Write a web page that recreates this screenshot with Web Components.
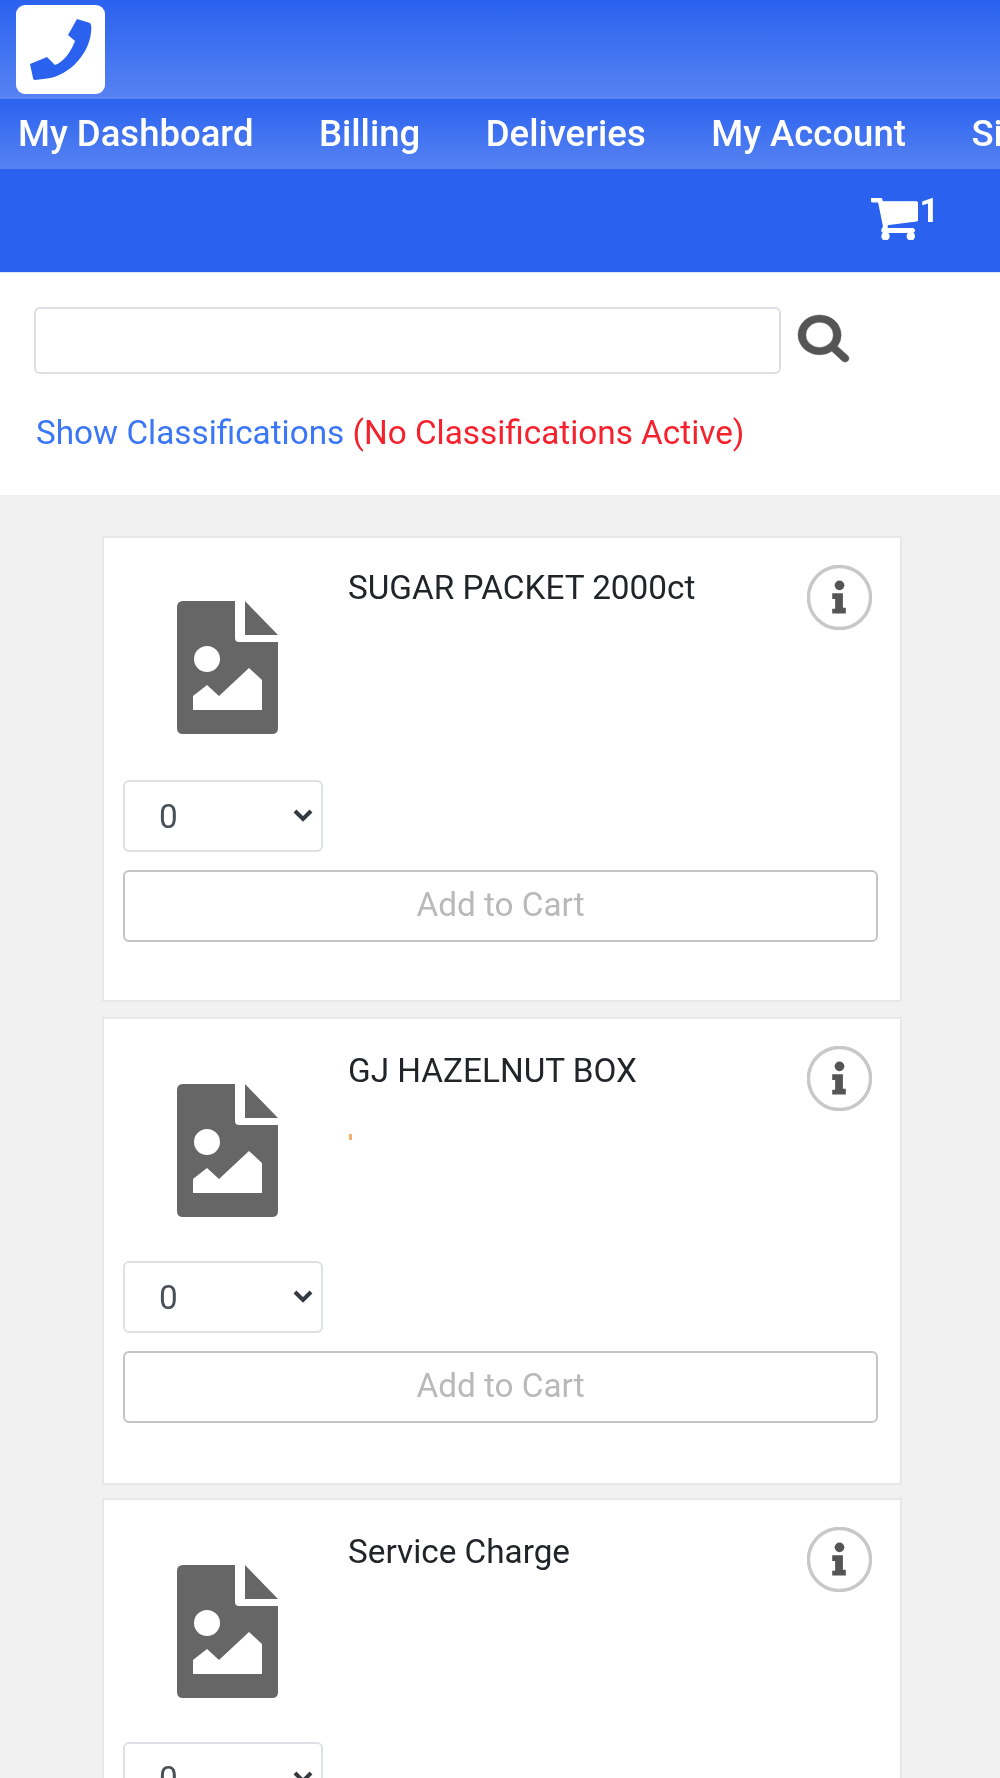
<!DOCTYPE html>
<html>
<head>
<meta charset="utf-8">
<title>Order</title>
<style>
  html, body { margin: 0; height: 1778px; overflow: hidden; background: #f1f1f1; font-family: Roboto, sans-serif; }
  /* the reference is a soft upscale, so take the edge off everything a little */
  body { filter: blur(0.5px); }
</style>
</head>
<body>
<app-header></app-header>
<search-panel></search-panel>
<product-list>
  <product-card name="SUGAR PACKET 2000ct"></product-card>
  <product-card name="GJ HAZELNUT BOX" mark></product-card>
  <product-card name="Service Charge"></product-card>
</product-list>

<script>
class AppHeader extends HTMLElement {
  constructor() {
    super();
    this.attachShadow({ mode: "open" });
    this.shadowRoot.innerHTML = `
      <style>
        :host { display: block; overflow: hidden; color: #fff; font-family: Roboto, sans-serif; }
        .brand {
          height: 99px;
          padding: 5px 0 0 16px;
          box-sizing: border-box;
          background: linear-gradient(#2a62ef, #5783f2);
        }
        .logo { display: block; width: 89px; height: 89px; background: #fff; border-radius: 9px; }
        nav {
          display: flex;
          gap: 65.5px;
          height: 68px;
          padding: 0 0 2px 18px;
          align-items: center;
          white-space: nowrap;
          font-size: 36.5px;
          font-weight: 500;
          background: linear-gradient(#2a62ef, #5783f2);
        }
        .cart-row {
          display: flex;
          justify-content: flex-end;
          height: 104px;
          padding: 29px 61px 0 0;
          box-sizing: border-box;
          background: #2a62ef;
          border-bottom: 1px solid #dfe7fb;
        }
        .cart { width: 47px; height: 42px; fill: #fff; stroke: #fff; stroke-width: 40; }
        .count { font-size: 34px; font-weight: 700; line-height: 25px; margin-left: 1px; }
      </style>
      <div class="brand">
        <svg class="logo" viewBox="16 5 89 89">
          <path fill="#2a62ef" d="M77 19L90 23Q92 25 91 33C88 57 66 78 43 79L35 80Q33 80 33 78L30 64L47 57L55 65C63 62 70 54 75 41L68 35Z"/>
        </svg>
      </div>
      <nav>
        <span>My Dashboard</span>
        <span>Billing</span>
        <span>Deliveries</span>
        <span>My Account</span>
        <span>Sign Out</span>
      </nav>
      <div class="cart-row">
        <svg class="cart" viewBox="64 256 1664 1408" preserveAspectRatio="none">
          <path d="M704 1536q0 52-38 90t-90 38-90-38-38-90 38-90 90-38 90 38 38 90zm896 0q0 52-38 90t-90 38-90-38-38-90 38-90 90-38 90 38 38 90zm128-1088v512q0 24-16.5 42.5t-40.5 21.5l-1044 122q13 60 13 70 0 16-24 64h920q26 0 45 19t19 45-19 45-45 19h-1024q-26 0-45-19t-19-45q0-11 8-31.5t16-36 21.5-40 15.5-29.5l-177-823h-204q-26 0-45-19t-19-45 19-45 45-19h256q16 0 28.5 6.5t19.5 15.5 13 24.5 8 26 5.5 29.5 4.5 26h1201q26 0 45 19t19 45z"/>
        </svg>
        <span class="count">1</span>
      </div>
    `;
  }
}

class SearchPanel extends HTMLElement {
  constructor() {
    super();
    this.attachShadow({ mode: "open" });
    this.shadowRoot.innerHTML = `
      <style>
        :host { display: block; height: 222px; padding: 34px 0 0 34px; box-sizing: border-box; background: #fff; font-family: Roboto, sans-serif; }
        .row { display: flex; align-items: flex-start; gap: 17px; }
        input {
          width: 747px;
          height: 67px;
          box-sizing: border-box;
          border: 2px solid #dcdfe4;
          border-radius: 6px;
          background: #fff;
          outline: none;
        }
        svg { width: 51px; height: 47px; margin-top: 8px; fill: #555; stroke: #555; stroke-width: 15; overflow: visible; }
        p { margin: 37px 0 0 2px; font-size: 33.3px; line-height: 44px; white-space: nowrap; }
        a { color: #3b76f6; text-decoration: none; }
        span { color: #f5222d; }
      </style>
      <div class="row">
        <input type="text">
        <svg viewBox="64 128 1664 1664" preserveAspectRatio="none">
          <path d="M1216 832q0-185-131.5-316.5t-316.5-131.5-316.5 131.5-131.5 316.5 131.5 316.5 316.5 131.5 316.5-131.5 131.5-316.5zm512 832q0 52-38 90t-90 38q-54 0-90-38l-343-342q-179 124-399 124-143 0-273.5-55.5t-225-150-150-225-55.5-273.5 55.5-273.5 150-225 225-150 273.5-55.5 273.5 55.5 225 150 150 225 55.5 273.5q0 220-124 399l343 343q37 37 37 90z"/>
        </svg>
      </div>
      <p><a href="#">Show Classifications</a> <span>(No Classifications Active)</span></p>
    `;
  }
}

class ProductList extends HTMLElement {
  constructor() {
    super();
    this.attachShadow({ mode: "open" });
    this.shadowRoot.innerHTML = `
      <style>
        :host { display: flex; flex-direction: column; gap: 15px; padding: 41px 98px 0 102px; }
      </style>
      <slot></slot>
    `;
  }
}

class ProductCard extends HTMLElement {
  static get observedAttributes() {
    return ["name"];
  }

  constructor() {
    super();
    this.attachShadow({ mode: "open" });
  }

  connectedCallback() {
    this.render();
  }

  attributeChangedCallback() {
    this.render();
  }

  render() {
    const mark = this.hasAttribute("mark") ? `<i class="mark"></i>` : "";
    this.shadowRoot.innerHTML = `
      <style>
        :host {
          display: block;
          height: 466px;
          flex: none;
          box-sizing: border-box;
          border: 2px solid #e8e8e8;
          background: #fff;
          padding: 0 22px 0 19px;
          font-family: Roboto, sans-serif;
        }
        :host(:nth-child(2)) { height: 468px; margin-bottom: -2px; }
        .top { display: flex; height: 242px; }
        .pic { width: 101px; height: 133px; margin: 63px 0 0 54px; fill: #666; flex: none; }
        .text { flex: 1; margin: 30px 0 0 70px; font-size: 33.3px; line-height: 40px; color: #212529; white-space: nowrap; }
        :host(:not(:first-child)) .pic { margin-top: 65px; }
        :host(:not(:first-child)) .text { margin-top: 32px; }
        .mark { display: block; width: 3px; height: 6px; margin: 43px 0 0 1px; background: #f5b06a; }
        .info { width: 65px; height: 65px; margin: 27px 6px 0 0; flex: none; }
        .qty { position: relative; width: 200px; }
        select {
          display: block;
          width: 200px;
          height: 72px;
          box-sizing: border-box;
          appearance: none;
          padding: 0 0 0 34px;
          border: 2px solid #dde1e6;
          border-radius: 6px;
          background: #fff;
          color: #495057;
          opacity: 1;
          font: 33.3px Roboto, sans-serif;
          outline: none;
        }
        .chev { position: absolute; right: 10px; top: 29px; width: 20px; height: 13px; fill: none; stroke: #343a40; stroke-width: 4; }
        button {
          display: block;
          width: 755px;
          height: 72px;
          margin-top: 18px;
          padding: 0 0 4px;
          box-sizing: border-box;
          border: 2px solid #c4c4c4;
          border-radius: 6px;
          background: #fff;
          color: #b9b9b9;
          font: 33.3px Roboto, sans-serif;
        }
      </style>
      <div class="top">
        <svg class="pic" viewBox="0 0 101 133">
          <path fill-rule="evenodd" d="M6 0H58V37Q58 41 62 41H101V127Q101 133 95 133H6Q0 133 0 127V6Q0 0 6 0ZM16 109V95L30 84L42 95L72 67L85 79V109ZM43 58A13 13 0 1 0 17 58A13 13 0 1 0 43 58Z"/>
          <path d="M68 0L101 34H68Z"/>
        </svg>
        <div class="text">${this.getAttribute("name")}${mark}</div>
        <svg class="info" viewBox="0 0 67 67">
          <circle cx="33.5" cy="33.5" r="32" fill="none" stroke="#c8c8c8" stroke-width="3.5"/>
          <circle cx="33.5" cy="21" r="5" fill="#555"/>
          <path fill="#555" d="M26 29H37V44H40V50H26V45H29V35H26Z"/>
        </svg>
      </div>
      <div class="qty">
        <select disabled><option>0</option></select>
        <svg class="chev" viewBox="0 0 20 13"><path d="M2 2L10 10L18 2"/></svg>
      </div>
      <button disabled>Add to Cart</button>
    `;
  }
}

customElements.define("app-header", AppHeader);
customElements.define("search-panel", SearchPanel);
customElements.define("product-list", ProductList);
customElements.define("product-card", ProductCard);
</script>
</body>
</html>
